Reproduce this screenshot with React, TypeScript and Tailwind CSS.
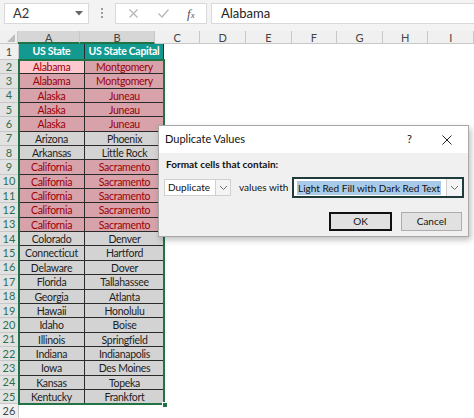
import React from 'react';

type Row = { n: number; state: string; capital: string; dup: boolean };

const rows: Row[] = [
  { n: 2, state: 'Alabama', capital: 'Montgomery', dup: true },
  { n: 3, state: 'Alabama', capital: 'Montgomery', dup: true },
  { n: 4, state: 'Alaska', capital: 'Juneau', dup: true },
  { n: 5, state: 'Alaska', capital: 'Juneau', dup: true },
  { n: 6, state: 'Alaska', capital: 'Juneau', dup: true },
  { n: 7, state: 'Arizona', capital: 'Phoenix', dup: false },
  { n: 8, state: 'Arkansas', capital: 'Little Rock', dup: false },
  { n: 9, state: 'California', capital: 'Sacramento', dup: true },
  { n: 10, state: 'California', capital: 'Sacramento', dup: true },
  { n: 11, state: 'California', capital: 'Sacramento', dup: true },
  { n: 12, state: 'California', capital: 'Sacramento', dup: true },
  { n: 13, state: 'California', capital: 'Sacramento', dup: true },
  { n: 14, state: 'Colorado', capital: 'Denver', dup: false },
  { n: 15, state: 'Connecticut', capital: 'Hartford', dup: false },
  { n: 16, state: 'Delaware', capital: 'Dover', dup: false },
  { n: 17, state: 'Florida', capital: 'Tallahassee', dup: false },
  { n: 18, state: 'Georgia', capital: 'Atlanta', dup: false },
  { n: 19, state: 'Hawaii', capital: 'Honolulu', dup: false },
  { n: 20, state: 'Idaho', capital: 'Boise', dup: false },
  { n: 21, state: 'Illinois', capital: 'Springfield', dup: false },
  { n: 22, state: 'Indiana', capital: 'Indianapolis', dup: false },
  { n: 23, state: 'Iowa', capital: 'Des Moines', dup: false },
  { n: 24, state: 'Kansas', capital: 'Topeka', dup: false },
  { n: 25, state: 'Kentucky', capital: 'Frankfort', dup: false },
];

const otherCols = ['C', 'D', 'E', 'F', 'G', 'H', 'I'];

const Chevron = () => (
  <svg width="9" height="6" viewBox="0 0 9 6">
    <path d="M1 1 L4.5 4.5 L8 1" fill="none" stroke="#6b6b6b" strokeWidth="1" />
  </svg>
);

// toolbar: name box + formula bar
const Toolbar = () => (
  <div className="flex h-[31px] items-start bg-[#f3f3f3] pt-[3px] font-['Lato',sans-serif]">
    <div className="ml-[4px] flex h-[21px] w-[85px] items-center justify-between border border-[#d9d9d9] bg-white pl-[8px] pr-[5px] text-[13px] text-[#333]">
      <span>A2</span>
      <svg width="8" height="5" viewBox="0 0 8 5">
        <path d="M0 0 L8 0 L4 4.5 Z" fill="#666" />
      </svg>
    </div>
    <div className="ml-[12px] mt-[5px] flex w-[3px] flex-col gap-[2px]">
      <div className="h-[2px] w-[2px] bg-[#9a9a9a]" />
      <div className="h-[2px] w-[2px] bg-[#9a9a9a]" />
      <div className="h-[2px] w-[2px] bg-[#9a9a9a]" />
    </div>
    <div className="ml-[11px] flex h-[21px] w-[92px] items-center border border-[#d9d9d9] bg-white">
      <svg className="ml-[13px]" width="9" height="9" viewBox="0 0 9 9">
        <path d="M0.5 0.5 L8.5 8.5 M8.5 0.5 L0.5 8.5" stroke="#b5b5b5" strokeWidth="1.2" />
      </svg>
      <svg className="ml-[20px]" width="11" height="9" viewBox="0 0 11 9">
        <path d="M0.5 4.5 L4 8 L10.5 0.5" fill="none" stroke="#b5b5b5" strokeWidth="1.2" />
      </svg>
      <span className="ml-[18px] font-['Liberation_Serif'] text-[13px] italic text-[#555]">
        f<span className="text-[9px]">x</span>
      </span>
    </div>
    <div className="ml-[4px] flex h-[21px] flex-1 items-center border border-r-0 border-[#d9d9d9] bg-white pl-[9px] text-[13px] text-[#222]">
      Alabama
    </div>
  </div>
);

const HeaderRow = () => (
  <div className="flex h-[13px] bg-[#f0f0f0] font-['Lato',sans-serif] text-[11px] leading-[13px] text-[#444]">
    <div className="relative w-[19px] border-r border-b border-[#c8c8c8]">
      <svg className="absolute right-[2px] bottom-[1px]" width="8" height="8" viewBox="0 0 8 8">
        <path d="M8 0 L8 8 L0 8 Z" fill="#bdbdbd" />
      </svg>
    </div>
    <div className="w-[66px] border-r border-b-2 border-r-[#c8c8c8] border-b-[#217346] bg-[#d6d6d6] text-center">A</div>
    <div className="w-[79px] border-r border-b-2 border-r-[#c8c8c8] border-b-[#217346] bg-[#d6d6d6] text-center">B</div>
    {otherCols.map((c) => (
      <div key={c} className="w-[45.6px] shrink-0 border-r border-b border-[#c8c8c8] text-center">
        {c}
      </div>
    ))}
  </div>
);

const RowNum = ({ n, selected }: { n: number; selected: boolean }) => (
  <div
    className={`flex w-[19px] shrink-0 items-center justify-center border-r border-b font-['Lato',sans-serif] text-[11px] ${
      selected
        ? 'border-b-[#c8c8c8] border-r-[#217346] bg-[#e2e2e2] text-[#2f6f4f]'
        : 'border-[#c8c8c8] bg-[#f0f0f0] text-[#444]'
    }`}
  >
    {n}
  </div>
);

const cellFont = "font-['Lato',sans-serif] text-[10.5px] tracking-[-0.3px]";

const DataRow = ({ row }: { row: Row }) => {
  const active = row.n === 2;
  const bgA = active ? 'bg-[#ffc7ce]' : row.dup ? 'bg-[#d7a2aa]' : 'bg-[#d3d3d3]';
  const bgB = row.dup ? 'bg-[#d7a2aa]' : 'bg-[#d3d3d3]';
  const text = row.dup ? 'text-[#9c0006]' : 'text-[#1e1e1e]';
  return (
    <div className="flex h-[14.35px] leading-[14px]">
      <RowNum n={row.n} selected />
      <div className={`w-[66px] shrink-0 whitespace-nowrap border-r border-b border-[#2a2a2a] text-center ${cellFont} ${bgA} ${text}`}>
        {row.state}
      </div>
      <div className={`w-[79px] shrink-0 whitespace-nowrap border-b border-[#2a2a2a] text-center ${cellFont} ${bgB} ${text}`}>
        {row.capital}
      </div>
      <div className="flex-1 bg-white" />
    </div>
  );
};

const DupDialog = () => (
  <div className="absolute left-[158px] top-[125px] flex h-[112px] w-[311px] flex-col whitespace-nowrap border border-[#a8a8a8] bg-[#f0f0f0] font-['Lato',sans-serif] text-[10px] text-[#111] shadow-[2px_3px_6px_rgba(0,0,0,0.25)]">
    <div className="flex h-[27px] items-center bg-white pl-[6px]">
      <span className="text-[11px]">Duplicate Values</span>
      <span className="ml-auto text-[11px]">?</span>
      <svg className="ml-[30px] mr-[16px]" width="10" height="10" viewBox="0 0 10 10">
        <path d="M0.5 0.5 L9.5 9.5 M9.5 0.5 L0.5 9.5" stroke="#222" strokeWidth="1" />
      </svg>
    </div>
    <div className="flex flex-1 flex-col pl-[5px] pr-[4px]">
      <div className="mt-[4px] pl-[2px] font-bold">Format cells that contain:</div>
      <div className="mt-[5px] flex items-center">
        <div className="flex h-[17px] w-[67px] items-center justify-between border border-[#d0d0d0] bg-white pl-[3px]">
          <span>Duplicate</span>
          <div className="flex h-full w-[15px] items-center justify-center border-l border-[#d0d0d0] bg-[#f4f4f4]">
            <Chevron />
          </div>
        </div>
        <span className="ml-[8px]">values with</span>
        <div className="ml-auto flex h-[21px] w-[172px] items-center border-2 border-[#1f3b3b] bg-white pl-[3px]">
          <span className="bg-[#a9cbe9] px-[1px] leading-[14px]">Light Red Fill with Dark Red Text</span>
          <div className="ml-auto flex h-full w-[16px] items-center justify-center border-l border-[#d0d0d0] bg-[#f4f4f4]">
            <Chevron />
          </div>
        </div>
      </div>
      <div className="mt-[14px] flex justify-end gap-[9px] pr-[2px]">
        <div className="flex h-[19px] w-[63px] items-center justify-center border-2 border-[#111] bg-[#e1e1e1]">OK</div>
        <div className="flex h-[19px] w-[61px] items-center justify-center border border-[#adadad] bg-[#e1e1e1]">Cancel</div>
      </div>
    </div>
  </div>
);

export default function App() {
  return (
    <div className="relative h-[418px] w-[474px] overflow-hidden bg-white">
      <Toolbar />
      <HeaderRow />
      <div>
        <div className="flex h-[16px] leading-[15px]">
          <RowNum n={1} selected={false} />
          <div className={`w-[66px] shrink-0 whitespace-nowrap border-r border-b border-[#2a2a2a] bg-[#139a90] text-center font-bold text-white ${cellFont}`}>
            US State
          </div>
          <div className={`w-[79px] shrink-0 whitespace-nowrap border-r border-b border-[#2a2a2a] bg-[#139a90] text-center font-bold text-white ${cellFont}`}>
            US State Capital
          </div>
          <div className="flex-1" />
        </div>
        {rows.map((r) => (
          <DataRow key={r.n} row={r} />
        ))}
        <div className="flex h-[14.35px]">
          <RowNum n={26} selected={false} />
          <div className="flex-1" />
        </div>
      </div>
      {/* selection outline + fill handle */}
      <div className="pointer-events-none absolute left-[18px] top-[59px] h-[346px] w-[147px] border-2 border-[#217346]" />
      <div className="absolute left-[162px] top-[402px] h-[6px] w-[6px] border border-white bg-[#217346]" />
      <DupDialog />
    </div>
  );
}
